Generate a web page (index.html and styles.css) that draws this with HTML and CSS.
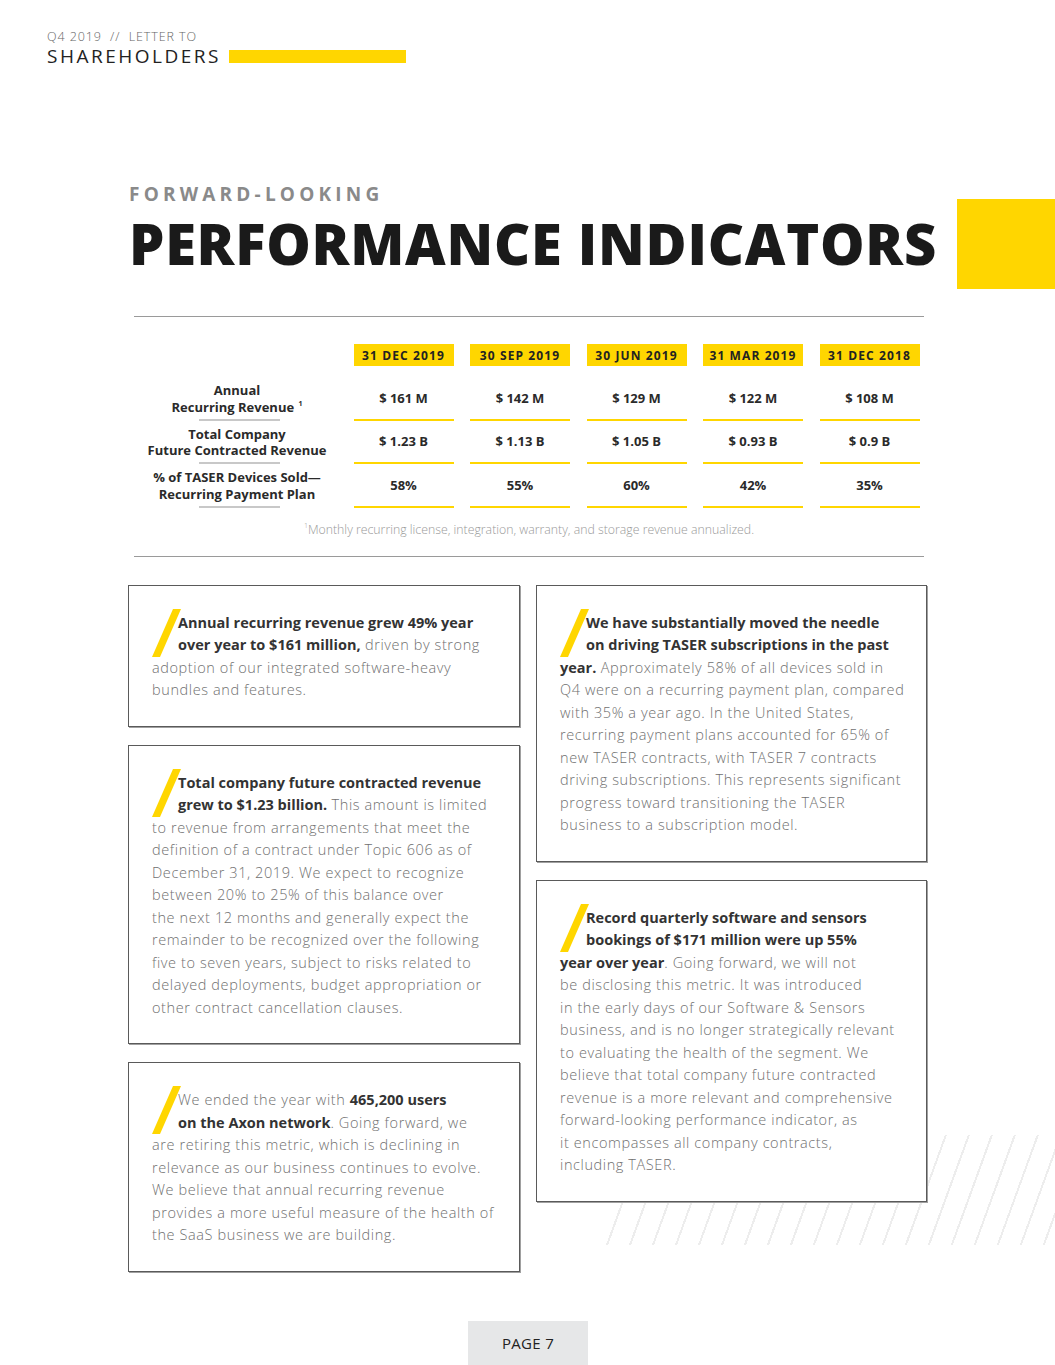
FILE: index.html
```html
<!DOCTYPE html>
<html lang="en">
<head>
<meta charset="utf-8">
<title>Q4 2019 Letter to Shareholders - Page 7</title>
<link rel="stylesheet" href="styles.css">
</head>
<body>
<div class="page">
  <header class="doc-header">
    <div class="kicker">Q4 2019 &nbsp;// &nbsp;LETTER TO</div>
    <div class="hdr-row">
      <span class="hdr-title">SHAREHOLDERS</span>
      <span class="hdr-bar"></span>
    </div>
  </header>

  <section class="title-block">
    <div class="titles">
      <div class="eyebrow">FORWARD-LOOKING</div>
      <h1 class="headline">PERFORMANCE INDICATORS</h1>
    </div>
    <div class="corner-square"></div>
  </section>

  <div class="rule"></div>

  <section class="metrics">
    <div class="grid">
      <div class="lbl-head"></div>
      <div class="chip">31 DEC 2019</div>
      <div class="chip">30 SEP 2019</div>
      <div class="chip">30 JUN 2019</div>
      <div class="chip">31 MAR 2019</div>
      <div class="chip">31 DEC 2018</div>

      <div class="lbl first"><span>Annual<br>Recurring Revenue <sup>1</sup></span></div>
      <div class="val first">$ 161 M</div>
      <div class="val first">$ 142 M</div>
      <div class="val first">$ 129 M</div>
      <div class="val first">$ 122 M</div>
      <div class="val first">$ 108 M</div>

      <div class="lbl"><span>Total Company<br>Future Contracted Revenue</span></div>
      <div class="val">$ 1.23 B</div>
      <div class="val">$ 1.13 B</div>
      <div class="val">$ 1.05 B</div>
      <div class="val">$ 0.93 B</div>
      <div class="val">$ 0.9 B</div>

      <div class="lbl"><span>% of TASER Devices Sold—<br>Recurring Payment Plan</span></div>
      <div class="val">58%</div>
      <div class="val">55%</div>
      <div class="val">60%</div>
      <div class="val">42%</div>
      <div class="val">35%</div>
    </div>
    <p class="footnote"><sup>1</sup>Monthly recurring license, integration, warranty, and storage revenue annualized.</p>
  </section>

  <div class="rule rule-bottom"></div>

  <section class="cards">
    <div class="stripes"></div>
    <div class="col col-left">
      <article class="card">
        <p><span class="slash"><svg viewBox="0 0 28 48" width="28" height="48"><polygon points="21,0 29,0 8,48 0,48" fill="#ffd600"/></svg></span><b>Annual recurring revenue grew 49% year<br>over year to $161 million,</b> driven by strong<br>adoption of our integrated software-heavy<br>bundles and features.</p>
      </article>
      <article class="card">
        <p><span class="slash"><svg viewBox="0 0 28 48" width="28" height="48"><polygon points="21,0 29,0 8,48 0,48" fill="#ffd600"/></svg></span><b>Total company future contracted revenue<br>grew to $1.23 billion.</b> This amount is limited<br>to revenue from arrangements that meet the<br>definition of a contract under Topic 606 as of<br>December 31, 2019. We expect to recognize<br>between 20% to 25% of this balance over<br>the next 12 months and generally expect the<br>remainder to be recognized over the following<br>five to seven years, subject to risks related to<br>delayed deployments, budget appropriation or<br>other contract cancellation clauses.</p>
      </article>
      <article class="card">
        <p><span class="slash"><svg viewBox="0 0 28 48" width="28" height="48"><polygon points="21,0 29,0 8,48 0,48" fill="#ffd600"/></svg></span>We ended the year with <b>465,200 users<br>on the Axon network</b>. Going forward, we<br>are retiring this metric, which is declining in<br>relevance as our business continues to evolve.<br>We believe that annual recurring revenue<br>provides a more useful measure of the health of<br>the SaaS business we are building.</p>
      </article>
    </div>
    <div class="col col-right">
      <article class="card">
        <p><span class="slash"><svg viewBox="0 0 28 48" width="28" height="48"><polygon points="21,0 29,0 8,48 0,48" fill="#ffd600"/></svg></span><b>We have substantially moved the needle<br>on driving TASER subscriptions in the past<br>year.</b> Approximately 58% of all devices sold in<br>Q4 were on a recurring payment plan, compared<br>with 35% a year ago. In the United States,<br>recurring payment plans accounted for 65% of<br>new TASER contracts, with TASER 7 contracts<br>driving subscriptions. This represents significant<br>progress toward transitioning the TASER<br>business to a subscription model.</p>
      </article>
      <article class="card">
        <p><span class="slash"><svg viewBox="0 0 28 48" width="28" height="48"><polygon points="21,0 29,0 8,48 0,48" fill="#ffd600"/></svg></span><b>Record quarterly software and sensors<br>bookings of $171 million were up 55%<br>year over year</b>. Going forward, we will not<br>be disclosing this metric. It was introduced<br>in the early days of our Software &amp; Sensors<br>business, and is no longer strategically relevant<br>to evaluating the health of the segment. We<br>believe that total company future contracted<br>revenue is a more relevant and comprehensive<br>forward-looking performance indicator, as<br>it encompasses all company contracts,<br>including TASER.</p>
      </article>
    </div>
  </section>

  <footer class="page-foot">
    <div class="page-num">PAGE 7</div>
  </footer>
</div>
</body>
</html>
```

FILE: styles.css
```css
* { box-sizing: border-box; }
html, body { margin: 0; padding: 0; background: #fff; }
body {
  font-family: "Open Sans", "Liberation Sans", sans-serif;
  color: #333;
  width: 1055px;
  height: 1365px;
  overflow: hidden;
}
.page { position: relative; width: 1055px; height: 1365px; }

.doc-header { padding: 30px 0 0 47px; }
.kicker { font-size: 12.5px; color: #666; letter-spacing: 0.9px; line-height: 14px; font-weight: 300; }
.hdr-row { display: flex; align-items: center; margin-top: 1px; }
.hdr-title { font-size: 19px; letter-spacing: 2.5px; color: #222; line-height: 22px; font-weight: 400; }
.hdr-bar { display: block; width: 177px; height: 13px; background: #ffd600; margin-left: 8px; }

.title-block { display: flex; justify-content: space-between; align-items: flex-start; padding-left: 129px; margin-top: 115px; }
.eyebrow { font-size: 19px; font-weight: 700; color: #8a8a8a; letter-spacing: 4.2px; line-height: 24px; }
.headline { margin: 7px 0 0; font-size: 56px; line-height: 60px; font-weight: 800; color: #1a1a1a; letter-spacing: 0.75px; }
.corner-square { width: 98px; height: 90px; background: #ffd600; margin-top: 17px; }

.rule { margin: 27px 131px 0 134px; border-top: 1px solid #9a9a9a; }

.metrics { margin: 0 131px 0 134px; padding-top: 27px; }
.grid { display: grid; grid-template-columns: 203px repeat(5, 100px); column-gap: 16.5px; }
.chip { background: #ffd600; height: 22px; display: flex; align-items: center; justify-content: center; font-size: 12px; font-weight: 700; letter-spacing: 1.1px; color: #222; }
.lbl, .val { height: 43.5px; display: flex; align-items: center; justify-content: center; text-align: center; font-size: 13px; font-weight: 700; color: #2a2a2a; line-height: 16.5px; }
.lbl { padding-left: 3px; background: linear-gradient(#c8c8c8, #c8c8c8) 53% bottom / 81px 2px no-repeat; }
.val { border-bottom: 2px solid #ffd600; }
.first { margin-top: 11px; }
.lbl sup { font-size: 7px; vertical-align: top; line-height: 10px; margin-left: 1px; }
.footnote { margin: 14px 0 0; text-align: center; font-size: 12.3px; color: #999; font-weight: 300; line-height: 15px; }
.footnote sup { font-size: 7px; vertical-align: top; line-height: 8px; }
.rule-bottom { margin-top: 19px; }

.cards { position: relative; display: flex; gap: 16px; padding-left: 128px; margin-top: 28px; }
.stripes {
  position: absolute; left: 600px; top: 550px; width: 455px; height: 110px;
  background: repeating-linear-gradient(110deg, #ededed 0 2px, transparent 2px 21.6px);
}
.col { display: flex; flex-direction: column; gap: 18px; position: relative; }
.col-left { width: 392px; }
.col-right { width: 391px; }
.card { background: #fff; border: 1px solid #5a5a5a; box-shadow: 1px 1px 0 #a0a0a0; padding: 26px 10px 24px 23px; }
.card p { margin: 0; font-size: 14.5px; line-height: 22.5px; color: #707070; font-weight: 300; letter-spacing: 0.6px; white-space: nowrap; }
.card b { font-weight: 700; color: #333; letter-spacing: 0; }
.slash { float: left; width: 26px; height: 45px; margin-top: -3px; }
.slash svg { display: block; overflow: visible; }

.page-foot { position: absolute; left: 0; right: 0; bottom: 0; display: flex; justify-content: center; }
.page-num { width: 120px; height: 44px; background: #e6e7e8; display: flex; align-items: center; justify-content: center; font-size: 15px; color: #222; letter-spacing: 0.3px; margin-left: 1px; }
```
